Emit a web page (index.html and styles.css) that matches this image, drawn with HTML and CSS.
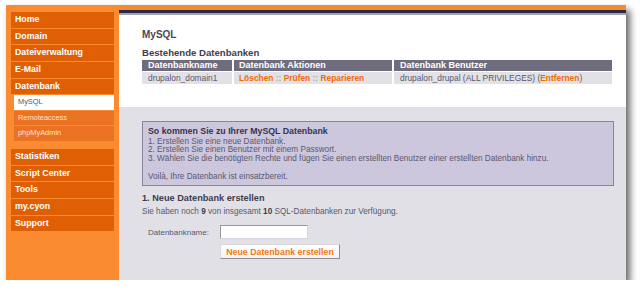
FILE: index.html
```html
<!DOCTYPE html>
<html lang="de">
<head>
  <meta charset="UTF-8" />
  <title>MySQL - my.cyon</title>
  <link rel="stylesheet" href="styles.css">
</head>
<body>
  <div class="window">
    <div class="sidebar">
      <ul class="menu">
        <li>Home</li>
        <li>Domain</li>
        <li>Dateiverwaltung</li>
        <li>E-Mail</li>
        <li>Datenbank</li>
      </ul>
      <ul class="submenu">
        <li class="active">MySQL</li>
        <li>Remoteaccess</li>
        <li>phpMyAdmin</li>
      </ul>
      <ul class="menu second">
        <li>Statistiken</li>
        <li>Script Center</li>
        <li>Tools</li>
        <li>my.cyon</li>
        <li>Support</li>
      </ul>
    </div>

    <div class="main">
      <div class="topbar"></div>

      <div class="upper">
        <h1>MySQL</h1>
        <h2>Bestehende Datenbanken</h2>
        <table class="dbtable">
          <tr>
            <th class="c1">Datenbankname</th>
            <th class="c2">Datenbank Aktionen</th>
            <th class="c3">Datenbank Benutzer</th>
          </tr>
          <tr>
            <td>drupalon_domain1</td>
            <td><a>Löschen</a> <span class="sep">::</span> <a>Prüfen</a> <span class="sep">::</span> <a>Reparieren</a></td>
            <td>drupalon_drupal (ALL PRIVILEGES) (<a>Entfernen</a>)</td>
          </tr>
        </table>
      </div>

      <div class="lower">
        <div class="infobox">
          <h3>So kommen Sie zu Ihrer MySQL Datenbank</h3>
          <ol>
            <li>Erstellen Sie eine neue Datenbank.</li>
            <li>Erstellen Sie einen Benutzer mit einem Passwort.</li>
            <li>Wählen Sie die benötigten Rechte und fügen Sie einen erstellten Benutzer einer erstellten Datenbank hinzu.</li>
          </ol>
          <p>Voilà, Ihre Datenbank ist einsatzbereit.</p>
        </div>

        <h2 class="step">1. Neue Datenbank erstellen</h2>
        <p class="note">Sie haben noch <b>9</b> von insgesamt <b>10</b> SQL-Datenbanken zur Verfügung.</p>

        <form class="newdb" onsubmit="return false">
          <label for="dbname">Datenbankname:</label>
          <input id="dbname" type="text" />
          <button type="submit">Neue Datenbank erstellen</button>
        </form>
      </div>
    </div>
  </div>
</body>
</html>
```

FILE: styles.css
```css
body {
  margin: 0;
  background: #ffffff;
  font-family: "Liberation Sans", Arial, sans-serif;
  font-size: 8.2px;
  color: #5a5870;
}

.window {
  margin: 5px 0 0 6px;
  width: 620px;
  height: 275px;
  display: flex;
  background: #fa8b31;
  box-shadow: 4px 5px 7px rgba(0, 0, 0, 0.6);
}

/* left navigation */
.sidebar {
  width: 113px;
  flex: none;
  padding: 7px 5px 0 5px;
  box-sizing: border-box;
}
.menu, .submenu {
  list-style: none;
  margin: 0;
  padding: 0;
}
.menu li {
  background: #e15f04;
  color: #ffffff;
  font-weight: bold;
  font-size: 8.8px;
  height: 15.7px;
  line-height: 15.7px;
  padding-left: 4px;
  margin-bottom: 1px;
}
.submenu {
  margin-left: 3px;
}
.submenu li {
  background: #ec7223;
  color: #fde2cc;
  font-size: 7.4px;
  height: 14.5px;
  line-height: 14.5px;
  padding-left: 4px;
  margin-bottom: 1px;
}
.submenu li.active {
  background: #ffffff;
  color: #555566;
}
.menu.second {
  margin-top: 8px;
}

/* content */
.main {
  flex: 1;
  display: flex;
  flex-direction: column;
  border-top: 5px solid #f68a30;
  background: #e0e0e6;
}
.topbar {
  height: 3px;
  background: #2b2a45;
  border-bottom: 2px solid #a4a2b6;
}
.upper {
  background: #ffffff;
  height: 92px;
  padding: 14px 14px 0 23px;
  box-sizing: border-box;
}
h1 {
  margin: 0;
  font-size: 10px;
  line-height: 12px;
  color: #4a4858;
}
h2 {
  margin: 6px 0 0;
  font-size: 9.6px;
  line-height: 11px;
  color: #3f3d4e;
}
.dbtable {
  margin-top: 2px;
  width: 470px;
  border-collapse: collapse;
}
.dbtable th {
  background: #6f6c7e;
  color: #ffffff;
  font-size: 9px;
  text-align: left;
  height: 11px;
  line-height: 11px;
  padding: 0 0 0 6px;
  border-right: 2px solid #ffffff;
  border-bottom: 1px solid #ffffff;
}
.dbtable td {
  background: #e1e1e6;
  font-size: 8.4px;
  height: 12px;
  line-height: 12px;
  padding: 0 0 0 6px;
  border-right: 2px solid #ffffff;
}
.dbtable th:last-child, .dbtable td:last-child {
  border-right: none;
}
.dbtable .c1 { width: 84px; }
.dbtable .c2 { width: 153px; padding-left: 5px; }
.dbtable td:nth-child(2) { padding-left: 5px; }
a {
  color: #f26b00;
  font-weight: bold;
}
.sep {
  color: #aaa;
  font-weight: bold;
}

.lower {
  flex: 1;
  padding: 14px 12px 0 23px;
}
.infobox {
  background: #ccc7dd;
  border: 1px solid #8a84a0;
  height: 65px;
  box-sizing: border-box;
  padding: 4px 5px 0;
}
h3 {
  margin: 0;
  font-size: 8.8px;
  line-height: 11px;
  color: #36344a;
}
.infobox ol {
  margin: 1px 0 0;
  padding: 0;
  list-style-position: inside;
  line-height: 8.3px;
  font-size: 8.2px;
}
.infobox p {
  margin: 10px 0 0;
  line-height: 8.3px;
  font-size: 8.2px;
}
h2.step {
  margin: 7px 0 0;
  font-size: 9.2px;
  line-height: 11px;
  color: #3f3d4e;
}
.note {
  margin: 2px 0 0;
  line-height: 11px;
}
.note b {
  color: #3f3d4e;
}
.newdb {
  margin: 8px 0 0 6px;
  display: grid;
  grid-template-columns: 72px auto;
  grid-template-rows: 14px 15px;
  row-gap: 5px;
  align-items: center;
  justify-items: start;
}
.newdb label {
  font-size: 8px;
}
.newdb input {
  width: 88px;
  height: 14px;
  box-sizing: border-box;
  margin: 0;
  padding: 0 2px;
  border: 1px solid #9a98a6;
  border-right-color: #d6d6dc;
  border-bottom-color: #d6d6dc;
  background: #ffffff;
}
.newdb button {
  grid-column: 2;
  width: 120px;
  height: 15px;
  margin: 0;
  padding: 0;
  font-family: inherit;
  font-size: 8.8px;
  font-weight: bold;
  color: #f27a10;
  background: linear-gradient(#ffffff, #f1f1f3);
  border: 1px solid #d8d8de;
  border-right-color: #8f8d9c;
  border-bottom-color: #8f8d9c;
}
```
